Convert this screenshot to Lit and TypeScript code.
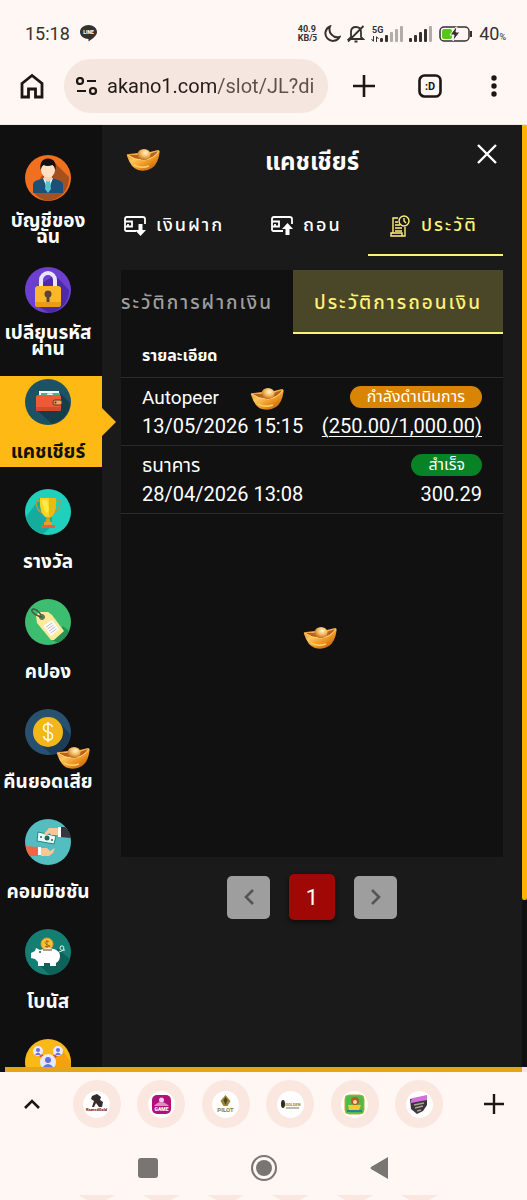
import { LitElement, html, svg, css } from "lit";
import { customElement } from "lit/decorators.js";
import { classMap } from "lit/directives/class-map.js";

const disc = (color: string, body: unknown) => svg`
  <svg class="disc" viewBox="0 0 46 46" aria-hidden="true">
    <circle cx="23" cy="23" r="23" fill=${color}></circle>${body}
  </svg>`;

const icons = {
  user: disc("#f0701f", svg`
    <path d="M30 8 L44 22 A23 23 0 0 1 23 46 A23 23 0 0 1 9 38 L16 22Z" fill="#a5511f"></path>
    <path d="M8 38V30q0-4 5-5l6-2h8l6 2q5 1 5 5v8Z" fill="#1d5079"></path>
    <path d="M18 23l5 13 5-13Z" fill="#eefafa"></path>
    <path d="M21 25h4l1 9-3 4-3-4Z" fill="#55c3cb"></path>
    <path d="M19 19h8v5l-4 3-4-3Z" fill="#f6cfae"></path>
    <ellipse cx="23" cy="15" rx="7" ry="7.500" fill="#fde0c5"></ellipse>
    <path d="M15.500 15Q14 4 23 3.500 32 4 30.500 15q-1-4-3-5-5 2-9 0-2 1-3 5Z" fill="#141010"></path>`),
  lock: disc("#6c3fd0", svg`
    <path d="M30 8L44 23A23 23 0 0 1 24 46L11 38V20Z" fill="#4c2aa8"></path>
    <path d="M16 21v-8a7 7 0 0 1 14 0v8" fill="none" stroke="#e9e4fb" stroke-width="4"></path>
    <rect x="10" y="19" width="26" height="21" rx="3" fill="#fbb72a"></rect>
    <path d="M10 35h26v2q0 3-3 3H13q-3 0-3-3Z" fill="#e99d16"></path>
    <circle cx="23" cy="27" r="3.500" fill="#5a4338"></circle><path d="M21.500 27h3v8h-3Z" fill="#5a4338"></path>`),
  wallet: disc("#1c5263", svg`
    <path d="M35 14l10 10A23 23 0 0 1 27 45L12 31Z" fill="#163d4b"></path>
    <path d="M14 12h20v7H14Z" fill="#f3fbf5"></path><path d="M16 14h19v4H16Z" fill="#58ad82"></path>
    <ellipse cx="25" cy="15.500" rx="3" ry="1.500" fill="#e1f4e5"></ellipse>
    <rect x="11" y="16" width="25" height="16" rx="2" fill="#ee5a35"></rect>
    <path d="M11 28h25v2q0 2-2 2H13q-2 0-2-2Z" fill="#d24a2b"></path>
    <rect x="28" y="21" width="9" height="5" rx="2" fill="#f3a64b" stroke="#583530"></rect><circle cx="30.500" cy="23.500" r="1" fill="#442c2a"></circle>`),
  trophy: disc("#1fd0bd", svg`
    <path d="M15 9L1 28A23 23 0 0 0 18 45l9-8V12Z" fill="#17ab9e"></path>
    <path d="M15 12h-4q0 10 8 13M31 12h4q0 10-8 13" fill="none" stroke="#bd963a" stroke-width="1.500"></path>
    <path d="M15 9h16q1 18-8 20-9-2-8-20Z" fill="#fbd51c"></path><path d="M24 9h7q1 18-7 20Z" fill="#e8ba12"></path>
    <path d="M17 11h5l2 9-2 5q-4-5-5-14Z" fill="#ffe94a"></path>
    <path d="M22 28h2l2 6h-6Z" fill="#d5a516"></path><rect x="19" y="33" width="8" height="3" fill="#ef9b2b"></rect><rect x="16" y="36" width="14" height="3" rx="1" fill="#e2653a"></rect>`),
  coupon: disc("#3dbd70", svg`
    <path d="M38 27l6 5A23 23 0 0 1 33 44L27 41Z" fill="#289253"></path>
    <path d="M11 17L14 13l9 0 4 3 12 16-10 9-3 0-14-17Z" fill="#ffe99a"></path>
    <circle cx="17" cy="18" r="2.500" fill="#3b8b55" stroke="#7a6847"></circle>
    <path d="M17 18C8 16 4 10 9 10q4 1 7 6" fill="none" stroke="#425b43" stroke-width="1.500"></path>
    <path d="M18 27l9-6 7 9-8 7Z" fill="#fffdfb"></path>
    <path d="M21 28l6-4M22.500 30l6-4M24 32l6-4M25.500 34l6-4" stroke="#bbb8c8"></path>`),
  dollar: disc("#28516f", svg`
    <path d="M33 12l12 13A23 23 0 0 1 27 46L13 33Z" fill="#1c3c57"></path>
    <circle cx="23" cy="23" r="15" fill="#f4b71a"></circle>
    <path d="M27.500 18q-1-3-4.500-3-4.500 0-4.500 4 0 3 4.500 4t4.500 4q0 4-4.500 4-3.500 0-4.500-4M23 13v20" fill="none" stroke="#fff9df" stroke-width="1.600"></path>`),
  hands: disc("#54bdc0", svg`
    <path d="M35 8h5q5 4 6 11l-11-1Z" fill="#38363d"></path><path d="M33 8h3v10h-3Z" fill="#fff"></path>
    <path d="M13 13l18 4-2 8-17-3Z" fill="#e4fffa" stroke="#2d827d"></path><circle cx="22" cy="19" r="2.500" fill="#24675e"></circle><circle cx="16" cy="18" r="1" fill="#24675e"></circle><circle cx="27" cy="21" r="1" fill="#24675e"></circle>
    <path d="M33 9l-9 0-5 6 1 2 5-3 1 2 7 0Z" fill="#f7c79a"></path>
    <path d="M1 27l12 1v9H5Q1 33 1 27Z" fill="#ef6740"></path><path d="M13 28h3v8h-3Z" fill="#fff"></path>
    <path d="M16 29l6 0 3 3 5-3-2 5-4 3-8 0Z" fill="#f7c79a"></path>`),
  pig: disc("#157e72", svg`
    <path d="M33 20l12 10A23 23 0 0 1 25 46L13 35Z" fill="#0f6259"></path>
    <circle cx="22" cy="15" r="6" fill="#f7c23a" stroke="#e19d20"></circle>
    <path d="M24 12.500q-4-1-4 1t4 3-4 1M22 11v8" fill="none" stroke="#a86e16"></path>
    <path d="M11 19l4 2q7-3 14-1 6 2 6 7 0 5-4 7v3h-6v-3h-6v3h-6v-4l-3-3-4-1v-5l4-2Z" fill="#fff"></path>
    <path d="M18 21h9" stroke="#503f35"></path><circle cx="15" cy="23" r="1" fill="#324a67"></circle>
    <path d="M34 23q7-2 4-6-3-1-3 2t5 2" fill="none" stroke="#d8f2e9"></path>`),
  team: disc("#f9b916", svg`
    <path d="M36 8l10 16v22H12Z" fill="#f5a10c"></path>
    <path d="M14 15l9 7 10-7" stroke="#e64634" stroke-width="3" fill="none"></path>
    <circle cx="13" cy="12" r="5" fill="#e8eafb"></circle><circle cx="33" cy="12" r="5" fill="#e8eafb"></circle><circle cx="23" cy="23" r="8" fill="#e8eafb"></circle>
    <circle cx="13" cy="11" r="2" fill="#6672e2"></circle><circle cx="33" cy="11" r="2" fill="#6672e2"></circle><circle cx="23" cy="21" r="3" fill="#5e6de0"></circle>
    <path d="M10 16q3-5 6 0ZM30 16q3-5 6 0ZM17 29q6-8 12 0Z" fill="#6672e2"></path>`),
};

const menu = [
  { icon: icons.user, label: "บัญชีของฉัน", lines: ["บัญชีของ", "ฉัน"] },
  { icon: icons.lock, label: "เปลียนรหัสผ่าน", lines: ["เปลียนรหัส", "ผ่าน"] },
  { icon: icons.wallet, label: "แคชเชียร์", lines: ["แคชเชียร์"], active: true },
  { icon: icons.trophy, label: "รางวัล", lines: ["รางวัล"] },
  { icon: icons.coupon, label: "คปอง", lines: ["คปอง"] },
  { icon: icons.dollar, label: "คืนยอดเสีย", lines: ["คืนยอดเสีย"] },
  { icon: icons.hands, label: "คอมมิชชัน", lines: ["คอมมิชชัน"] },
  { icon: icons.pig, label: "โบนัส", lines: ["โบนัส"] },
  { icon: icons.team, label: "แนะนำเพื่อน", lines: [] },
];

const rows = [
  { method: "Autopeer", date: "13/05/2026 15:15", status: "กำลังดำเนินการ", tone: "pending", amount: "(250.00/1,000.00)", link: true },
  { method: "ธนาคาร", date: "28/04/2026 13:08", status: "สำเร็จ", tone: "done", amount: "300.29", link: false },
];

const ingot = (place: string) => html`
  <svg class="ingot ${place}" viewBox="0 0 34 24" aria-hidden="true">
    <defs>
      <linearGradient id="gold" x1="0" y1="0" x2="1" y2="1">
        <stop offset="0" stop-color="#d9822b"></stop><stop offset=".35" stop-color="#ffc65a"></stop>
        <stop offset=".65" stop-color="#e98f1d"></stop><stop offset="1" stop-color="#a94c0b"></stop>
      </linearGradient>
      <radialGradient id="pearl" cx=".6" cy=".35" r=".7">
        <stop offset="0" stop-color="#fff6cf"></stop><stop offset=".5" stop-color="#f3b95a"></stop><stop offset="1" stop-color="#b8641c"></stop>
      </radialGradient>
    </defs>
    <path d="M1 8Q0 6 3 6L12 5 24 4 32 2Q34 2 33.500 5 32 16 26 20 20 24 12 22 5 20 1 8Z" fill="url(#gold)"></path>
    <path d="M3 7Q9 12 18 11.500 28 10 32 3.500 27 4 24 6L11 7Z" fill="#b9621f"></path>
    <path d="M1.500 7Q9 12.500 18 12 28 11 33 3" fill="none" stroke="#ffd475"></path>
    <ellipse cx="18" cy="6.500" rx="6.500" ry="5.500" fill="url(#pearl)"></ellipse>
    <path d="M8 17Q14 21 23 18" fill="none" stroke="#ffd36c" stroke-width="1.500"></path>
  </svg>`;

const cardIcon = (up: boolean) => svg`
  <svg class="tab-icon" viewBox="0 0 22 22" fill="none" stroke="currentColor" stroke-width="1.800" aria-hidden="true">
    <path d="M12 16H2.500Q1 16 1 14.500V4Q1 2 3 2H18.500Q21 2 21 4V9"></path>
    <path d="M1 6.500H8V11.500H4M4 9v2.500M1 11.500h3"></path>
    ${up
      ? svg`<path d="M16.500 8l5.500 6h-3.500V20h-4v-6h-3.500Z" fill="currentColor" stroke="none"></path>`
      : svg`<path d="M16.500 21l5.500-6h-3.500V9h-4v6h-3.500Z" fill="currentColor" stroke="none"></path>`}
  </svg>`;

const historyIcon = svg`
  <svg class="tab-icon" viewBox="0 0 22 22" fill="none" stroke="currentColor" stroke-width="1.400" aria-hidden="true">
    <path d="M9 3H4V18H2V21H16V12M2 18H13V21M6 7h3M6 10h5M6 13h7M6 16h7"></path>
    <circle cx="15" cy="6" r="5"></circle><path d="M15 3v3l2 2"></path>
  </svg>`;

const bars = (full: number, x: number) =>
  [0, 1, 2, 3, 4].map((i) => svg`<rect x=${x + i * 5} y=${12 - i * 3} width="3" height=${4 + i * 3} rx="1" fill=${i < full ? "#35312f" : "#b3aca9"}></rect>`);

const logos = [
  { name: "lion", art: svg`<path d="M9 5l5-2 4 3-1 3 3 2-1 5h-3l-3-4-2 4h-2l2-6-3-2Z" fill="#342b2a"></path><text x="13.500" y="20" font-size="4" font-weight="900" fill="#8d2326" text-anchor="middle">RoaredGold</text>` },
  { name: "game", art: svg`<rect x="4" y="4" width="19" height="19" rx="5" fill="#b0127b"></rect><circle cx="13.500" cy="9" r="2.500" fill="#f9c8ea"></circle><path d="M6 15q7-8 15 0Z" fill="#e58ac7"></path><text x="13.500" y="20" font-size="5" font-weight="900" fill="#fff" text-anchor="middle">GAME</text>` },
  { name: "pharaoh", art: svg`<path d="M13.500 4l5 6-3 5h-4l-3-5Z" fill="#9b8435"></path><path d="M13.500 6l2 3-2 5-2-5Z" fill="#4e461f"></path><text x="13.500" y="21" font-size="6" font-weight="700" fill="#8c7930" text-anchor="middle">PILOT</text>` },
  { name: "golden", art: svg`<ellipse cx="6" cy="13" rx="2" ry="4" fill="#302b20"></ellipse><text x="16" y="15" font-size="4" font-weight="900" fill="#a8923c" text-anchor="middle">GOLDEN</text><path d="M9 17h13" stroke="#77736a"></path>` },
  { name: "jungle", art: svg`<rect x="4" y="4" width="19" height="19" rx="4" fill="#53b94c" stroke="#c3a92a"></rect><circle cx="14" cy="10" r="4" fill="#b75c22"></circle><circle cx="14" cy="11" r="2" fill="#f6dba2"></circle><path d="M7 14h13l-2 5H8Z" fill="#f4cb31"></path><path d="M6 20h15" stroke="#1e8799" stroke-width="2"></path>` },
  { name: "shield", art: svg`<path d="M4 8l17-3v9l-4 6-6 3-6-5Z" fill="#3c343e"></path><path d="M7 7l14-3v5L5 12V9Z" fill="#d46fdc"></path><path d="M8 14l10-2M9 17l8-2M11 20l4-1" stroke="#a9a58b" stroke-width="1.500"></path>` },
];

@customElement("app-root")
export class AppRoot extends LitElement {
  static styles = css`
    :host {
      display: flex;
      flex-direction: column;
      height: 100vh;
      overflow: hidden;
      background: #fff7f4;
      color: #fff;
      font-family: Roboto, "Noto Sans Thai", "Noto Sans", sans-serif;
    }
    * { box-sizing: border-box; }
    button, input { font: inherit; color: inherit; border: 0; padding: 0; margin: 0; background: none; }
    button { cursor: pointer; }
    svg { display: block; flex: none; }

    .status { display: flex; align-items: center; height: 59px; padding: 8px 21px 0 25px; color: #35312f; font-size: 18px; }
    .status .line { margin-left: 10px; }
    .right { display: flex; align-items: center; gap: 6px; margin-left: auto; }
    .speed { font-size: 9px; line-height: 9px; font-weight: 700; }
    .percent { font-size: 9px; }

    .toolbar { display: flex; align-items: center; height: 66px; padding-bottom: 12px; border-bottom: 1px solid #f3e5df; color: #1d1713; }
    .tool { display: grid; place-items: center; width: 64px; height: 48px; }
    .address { display: flex; align-items: center; flex: 1; min-width: 0; gap: 9px; height: 54px; padding: 0 8px 0 12px; border-radius: 27px; background: #f5e6df; }
    .address input {
      flex: 1; min-width: 0; height: 40px; font-size: 20px; color: #241b17; outline: 0;
      background: linear-gradient(90deg, #241b17 110px, #604f49 110px);
      -webkit-background-clip: text; background-clip: text; -webkit-text-fill-color: transparent;
    }
    .tool.add { width: 72px; }
    .tool.tabs-count { width: 60px; }
    .tool.more { width: 67px; }

    .page { position: relative; display: grid; grid-template-columns: 102px minmax(0, 1fr) 5px; grid-template-rows: minmax(0, 1fr) 5px; flex: 1; min-height: 0; background: #101010; }
    .sidebar { display: flex; flex-direction: column; gap: 19px; min-height: 0; padding-top: 27px; z-index: 1; clip-path: inset(0 -14px 0 0); }
    .item { position: relative; display: flex; flex-direction: column; align-items: center; justify-content: space-between; flex: none; min-height: 91px; padding: 3px 6px 5px 0; font-size: 19px; font-weight: 700; line-height: 20px; white-space: nowrap; }
    .item.double { min-height: 93px; padding-bottom: 0; line-height: 16px; }
    .item.active { background: #ffb914; color: #14100a; }
    .item.active::after { content: ""; position: absolute; left: 100%; top: 32px; border: 14px solid transparent; border-left-color: #ffb914; border-right: 0; }
    .disc { width: 46px; height: 46px; }
    .item span { display: block; }

    .main { display: flex; flex-direction: column; min-width: 0; padding: 0 19px; background: #1a1a1a; }
    .header { display: grid; grid-template-columns: 32px 1fr 32px; align-items: center; height: 70px; }
    .header h1 { grid-column: 2; margin: 4px 0 0; text-align: center; font-size: 24px; line-height: 32px; }
    .close { display: grid; place-items: center; height: 32px; margin-bottom: 12px; }
    .tabs { display: grid; grid-template-columns: 147fr 100fr 135fr; height: 61px; margin-bottom: 14px; }
    .tab { display: flex; align-items: center; gap: 10px; padding-left: 3px; font-size: 18px; font-weight: 500; letter-spacing: 2px; white-space: nowrap; }
    .tab-icon { width: 22px; height: 22px; }
    .tab.active { padding-left: 21px; color: #fff176; border-bottom: 2px solid #fff176; border-top: 2px solid transparent; }

    .card { flex: 1; min-height: 0; background: #111; }
    .subtabs { display: grid; grid-template-columns: 172fr 210fr; height: 64px; }
    .subtab { display: flex; align-items: center; justify-content: flex-end; overflow: hidden; padding: 3px 20px 0 0; color: #9e9e9e; font-size: 19px; font-weight: 500; letter-spacing: 2px; white-space: nowrap; }
    .subtab.active { justify-content: center; padding: 5px 0 0; color: #fff176; background: #4a4728; border-bottom: 2px solid #fff176; }
    table { width: 100%; border-collapse: collapse; }
    th { height: 43px; padding: 2px 21px 0; text-align: left; font-size: 16px; font-weight: 700; border-bottom: 1px solid #2b2b2b; }
    td { height: 68px; padding: 6px 0 4px 21px; border-bottom: 1px solid #2b2b2b; font-size: 20px; line-height: 28px; white-space: nowrap; }
    td + td { padding: 6px 21px 4px 0; text-align: right; }
    td div { height: 28px; }
    td .method { font-size: 19px; }
    td a { color: inherit; text-underline-offset: 3px; text-decoration-thickness: 1px; }
    .badge { display: inline-block; padding: 0 17px; border-radius: 11px; font-size: 16px; line-height: 22px; vertical-align: top; margin-top: 2px; }
    .pending { background: #d98504; }
    .done { background: #078224; }

    .pager { display: flex; align-items: center; justify-content: center; gap: 19px; padding: 17px 0 147px; }
    .page-btn { display: grid; place-items: center; width: 43px; height: 43px; border-radius: 5px; background: #9e9e9e; color: #555; }
    .page-btn.current { width: 46px; height: 46px; background: #a00805; color: #fff; font-size: 22px; box-shadow: 0 2px 5px #0009; }

    .vbar { height: calc(82% + 3px); border-radius: 0 0 2px 2px; background: #ffb300; }
    .hbar { grid-column: 1 / 3; margin-left: 5px; background: #e5a51a; }
    .corner { background: #eee8e6; }

    .ingot { position: absolute; z-index: 2; width: 34px; height: 24px; }
    .ingot.a { left: 126px; top: 23px; }
    .ingot.b { left: 250px; top: 262px; }
    .ingot.c { left: 303px; top: 501px; }
    .ingot.d { left: 56px; top: 621px; }

    .strip { display: grid; grid-template-columns: repeat(8, minmax(0, 1fr)); align-items: center; justify-items: center; height: 64px; padding-right: 11px; color: #1d1713; }
    .strip button { display: grid; place-items: center; width: 48px; height: 48px; border-radius: 50%; }
    .strip .site { background: #fae7df; }
    .strip .plus { width: 44px; justify-self: end; }
    .site svg { border-radius: 50%; background: #fff; }
    .nav { display: grid; grid-template-columns: repeat(3, 116px); justify-content: center; align-items: center; justify-items: center; height: 59px; padding-top: 5px; }
    .nav button { display: grid; place-items: center; width: 48px; height: 48px; }
    .peek { display: grid; grid-template-columns: repeat(8, minmax(0, 1fr)); justify-items: center; height: 5px; padding-right: 11px; }
    .peek i { width: 37px; height: 5px; background: #fae7df; clip-path: polygon(0 0, 100% 0, 76% 100%, 24% 100%); }
    .peek i:first-child { grid-column: 2; }
  `;

  render() {
    return html`
      <div class="status">
        <span>15:18</span>
        <svg class="line" width="17" height="17" viewBox="0 0 17 17" aria-hidden="true"><path d="M8.500 0C13 0 17 3 17 7c0 4-5 7-8.500 9.500V14C4 14 0 11 0 7s4-7 8.500-7Z" fill="#35312f"></path><text x="8.500" y="9" font-size="5" font-weight="900" fill="#fff" text-anchor="middle">LINE</text></svg>
        <div class="right">
          <div class="speed">40.9<br />KB/วิ</div>
          <svg width="18" height="18" viewBox="0 0 18 18" fill="none" stroke="#35312f" stroke-width="2" aria-hidden="true"><path d="M7 1.500a7.500 7.500 0 1 0 9.500 10.500A8 8 0 0 1 7 1.500Z"></path></svg>
          <svg width="18" height="18" viewBox="0 0 18 18" fill="none" stroke="#35312f" stroke-width="1.800" aria-hidden="true"><path d="M2 14h14l-2-2V7q0-5-5-5T4 7v5ZM1 16.500L16.500 1M7.500 16.500h3"></path></svg>
          <svg width="32" height="16" viewBox="0 0 32 16" aria-hidden="true">
            <text x="1" y="7" font-size="9" font-weight="700" fill="#35312f">5G</text>
            <path d="M2.500 10v5M0.500 13l2 2.500M5.500 16v-5M7.500 13l-2-2.500" stroke="#35312f"></path>${bars(2, 9)}
          </svg>
          <svg width="24" height="16" viewBox="0 0 24 16" aria-hidden="true">${bars(4, 0)}</svg>
          <svg width="34" height="16" viewBox="0 0 34 16" aria-hidden="true"><rect x="1" y="1" width="29" height="14" rx="4" fill="none" stroke="#35312f" stroke-width="1.500"></rect><path d="M32 5v6" stroke="#35312f" stroke-width="2"></path><rect x="3" y="3" width="10" height="10" rx="2" fill="#55c81e"></rect><path d="M17 1l-6 8h4l-1 6 7-9h-4l1-5Z" fill="#35312f" stroke="#fff7f4"></path></svg>
          <div>40<span class="percent">%</span></div>
        </div>
      </div>
      <div class="toolbar">
        <button class="tool" aria-label="Home"><svg width="24" height="26" viewBox="0 0 24 26" fill="none" stroke="currentColor" stroke-width="2.800"><path d="M2 10.500L12 2.500l10 8V24h-6.500v-8h-7v8H2Z"></path></svg></button>
        <div class="address">
          <svg width="22" height="18" viewBox="0 0 22 18" fill="none" stroke="currentColor" stroke-width="2.200" aria-hidden="true"><circle cx="4" cy="4" r="3"></circle><path d="M11 4h9M1 14h9"></path><circle cx="17" cy="14" r="3"></circle></svg>
          <input type="text" aria-label="Address" value="akano1.com/slot/JL?di" />
        </div>
        <button class="tool add" aria-label="New tab"><svg width="22" height="22" viewBox="0 0 22 22" stroke="currentColor" stroke-width="2.600"><path d="M11 0v22M0 11h22"></path></svg></button>
        <button class="tool tabs-count" aria-label="Tabs"><svg width="24" height="24" viewBox="0 0 24 24"><rect x="1.500" y="1.500" width="21" height="21" rx="5" fill="none" stroke="currentColor" stroke-width="2.600"></rect><text x="12" y="16" font-size="11" font-weight="700" fill="currentColor" text-anchor="middle">:D</text></svg></button>
        <button class="tool more" aria-label="More"><svg width="6" height="22" viewBox="0 0 6 22" fill="currentColor"><circle cx="3" cy="3" r="2.700"></circle><circle cx="3" cy="11" r="2.700"></circle><circle cx="3" cy="19" r="2.700"></circle></svg></button>
      </div>
      <div class="page">
        <nav class="sidebar">
          ${menu.map((m) => html`
            <button class=${classMap({ item: true, active: !!m.active, double: m.lines.length > 1 })} aria-label=${m.label}>
              ${m.icon}<span>${m.lines.map((l) => html`<span>${l}</span>`)}</span>
            </button>`)}
        </nav>
        <main class="main">
          <header class="header">
            <h1>แคชเชียร์</h1>
            <button class="close" aria-label="Close"><svg width="20" height="20" viewBox="0 0 20 20" stroke="currentColor" stroke-width="2.400"><path d="M1 1l18 18M19 1L1 19"></path></svg></button>
          </header>
          <div class="tabs">
            <button class="tab">${cardIcon(false)}<span>เงินฝาก</span></button>
            <button class="tab">${cardIcon(true)}<span>ถอน</span></button>
            <button class="tab active">${historyIcon}<span>ประวัติ</span></button>
          </div>
          <section class="card">
            <div class="subtabs">
              <button class="subtab"><span>ประวัติการฝากเงิน</span></button>
              <button class="subtab active"><span>ประวัติการถอนเงิน</span></button>
            </div>
            <table>
              <thead><tr><th colspan="2">รายละเอียด</th></tr></thead>
              <tbody>
                ${rows.map((r) => html`
                  <tr>
                    <td><div class="method">${r.method}</div><div>${r.date}</div></td>
                    <td><div><span class="badge ${r.tone}">${r.status}</span></div><div>${r.link ? html`<a href="#">${r.amount}</a>` : r.amount}</div></td>
                  </tr>`)}
              </tbody>
            </table>
          </section>
          <div class="pager">
            <button class="page-btn" aria-label="Previous"><svg width="12" height="16" viewBox="0 0 12 16" fill="none" stroke="currentColor" stroke-width="2.600"><path d="M10 1L3 8l7 7"></path></svg></button>
            <button class="page-btn current">1</button>
            <button class="page-btn" aria-label="Next"><svg width="12" height="16" viewBox="0 0 12 16" fill="none" stroke="currentColor" stroke-width="2.600"><path d="M2 1l7 7-7 7"></path></svg></button>
          </div>
        </main>
        <div class="vbar"></div>
        <div class="hbar"></div>
        <div class="corner"></div>
        ${["a", "b", "c", "d"].map(ingot)}
      </div>
      <div class="strip">
        <button aria-label="Expand"><svg width="18" height="12" viewBox="0 0 18 12" fill="none" stroke="currentColor" stroke-width="2.600"><path d="M2 10l7-7 7 7"></path></svg></button>
        ${logos.map((l) => html`<button class="site" aria-label=${l.name}><svg width="27" height="27" viewBox="0 0 27 27">${l.art}</svg></button>`)}
        <button class="plus" aria-label="Add"><svg width="20" height="20" viewBox="0 0 20 20" stroke="currentColor" stroke-width="2.400"><path d="M10 0v20M0 10h20"></path></svg></button>
      </div>
      <div class="nav">
        <button aria-label="Recent"><svg width="20" height="20" viewBox="0 0 20 20"><rect width="20" height="20" rx="3" fill="#787573"></rect></svg></button>
        <button aria-label="Home screen"><svg width="28" height="28" viewBox="0 0 28 28"><circle cx="14" cy="14" r="12" fill="none" stroke="#787573" stroke-width="2"></circle><circle cx="14" cy="14" r="8" fill="#787573"></circle></svg></button>
        <button aria-label="Back"><svg width="20" height="22" viewBox="0 0 20 22"><path d="M18 0V22L1 12q-1-1 0-2Z" fill="#787573"></path></svg></button>
      </div>
      <div class="peek">${logos.map(() => html`<i></i>`)}</div>
    `;
  }
}
